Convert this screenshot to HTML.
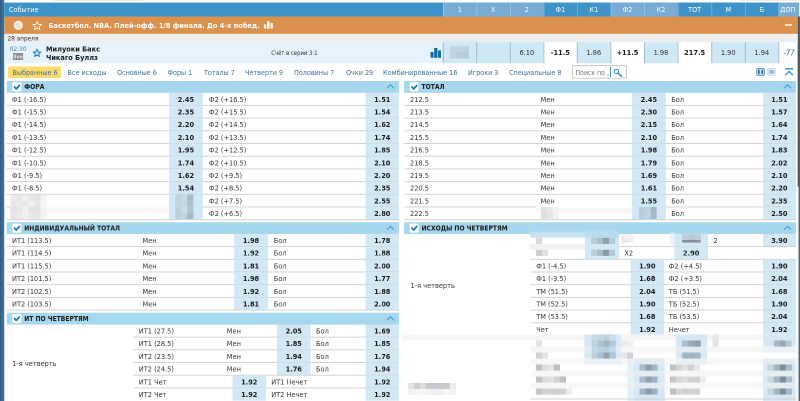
<!DOCTYPE html>
<html lang="ru"><head><meta charset="utf-8"><title>NBA</title>
<style>
html,body{margin:0;padding:0;background:#fff;overflow:hidden;}
body{width:800px;height:401px;overflow:hidden;position:relative;font-family:"DejaVu Sans Condensed","Liberation Sans",sans-serif;font-size:7.35px;color:#222;}
#z{position:absolute;left:0;top:0;width:800px;height:401px;zoom:2;transform:scale(.5);transform-origin:0 0;will-change:transform;}
#z>div,#z>svg{position:absolute;}
.t{white-space:nowrap;}
.w{color:#fff;}
.b{font-weight:bold;}
.tab{color:#3f6f9f;}
</style></head><body><div id="z">
<svg style="left:0;top:0" width="800" height="401" viewBox="0 0 800 401"><defs><filter id="b35" x="-60%" y="-60%" width="220%" height="220%"><feGaussianBlur stdDeviation="0.35"/></filter><filter id="b40" x="-60%" y="-60%" width="220%" height="220%"><feGaussianBlur stdDeviation="0.4"/></filter><filter id="b50" x="-60%" y="-60%" width="220%" height="220%"><feGaussianBlur stdDeviation="0.5"/></filter></defs>
<rect x="0.00" y="0.00" width="800.00" height="2.70" fill="#fff"/>
<rect x="54.00" y="0.00" width="89.00" height="0.70" fill="#e2e2e2"/>
<rect x="740.00" y="0.00" width="56.00" height="0.70" fill="#e2e2e2"/>
<rect x="0.00" y="0.00" width="4.20" height="401.00" fill="#2f70a6"/>
<rect x="0.00" y="0.00" width="1.20" height="401.00" fill="#3a5a78"/>
<rect x="797.70" y="16.50" width="1.30" height="385.00" fill="#d4d4d4"/>
<rect x="797.70" y="16.50" width="1.20" height="170.00" fill="#454545"/>
<rect x="798.80" y="16.50" width="1.20" height="385.00" fill="#3d6488"/>
<rect x="797.00" y="2.60" width="2.00" height="13.90" fill="#78acd4"/>
<rect x="799.00" y="2.60" width="1.00" height="13.90" fill="#e6eef5"/>
<rect x="4.20" y="2.60" width="792.80" height="13.90" fill="#3e94c8"/>
<rect x="443.00" y="2.60" width="33.50" height="13.90" fill="#78acd4"/>
<rect x="443.00" y="2.60" width="0.70" height="13.90" fill="rgba(255,255,255,.35)"/>
<rect x="476.50" y="2.60" width="33.50" height="13.90" fill="#78acd4"/>
<rect x="476.50" y="2.60" width="0.70" height="13.90" fill="rgba(255,255,255,.35)"/>
<rect x="510.00" y="2.60" width="33.70" height="13.90" fill="#78acd4"/>
<rect x="510.00" y="2.60" width="0.70" height="13.90" fill="rgba(255,255,255,.35)"/>
<rect x="543.70" y="2.60" width="33.30" height="13.90" fill="#3e94c8"/>
<rect x="543.70" y="2.60" width="0.70" height="13.90" fill="rgba(255,255,255,.35)"/>
<rect x="577.00" y="2.60" width="33.70" height="13.90" fill="#3e94c8"/>
<rect x="577.00" y="2.60" width="0.70" height="13.90" fill="rgba(255,255,255,.35)"/>
<rect x="610.70" y="2.60" width="33.50" height="13.90" fill="#78acd4"/>
<rect x="610.70" y="2.60" width="0.70" height="13.90" fill="rgba(255,255,255,.35)"/>
<rect x="644.20" y="2.60" width="33.60" height="13.90" fill="#78acd4"/>
<rect x="644.20" y="2.60" width="0.70" height="13.90" fill="rgba(255,255,255,.35)"/>
<rect x="677.80" y="2.60" width="33.70" height="13.90" fill="#3e94c8"/>
<rect x="677.80" y="2.60" width="0.70" height="13.90" fill="rgba(255,255,255,.35)"/>
<rect x="711.50" y="2.60" width="33.50" height="13.90" fill="#3e94c8"/>
<rect x="711.50" y="2.60" width="0.70" height="13.90" fill="rgba(255,255,255,.35)"/>
<rect x="745.00" y="2.60" width="33.60" height="13.90" fill="#3e94c8"/>
<rect x="745.00" y="2.60" width="0.70" height="13.90" fill="rgba(255,255,255,.35)"/>
<rect x="778.60" y="2.60" width="18.40" height="13.90" fill="#78acd4"/>
<rect x="778.60" y="2.60" width="0.70" height="13.90" fill="rgba(255,255,255,.35)"/>
<rect x="4.20" y="16.50" width="793.60" height="17.40" fill="#da914e"/>
<rect x="263.90" y="24.40" width="2.40" height="4.20" fill="#fdf3e8"/>
<rect x="267.10" y="21.20" width="2.60" height="7.40" fill="#fdf3e8"/>
<rect x="270.50" y="23.00" width="2.40" height="5.60" fill="#fdf3e8"/>
<rect x="784.90" y="24.00" width="7.20" height="2.00" fill="#f6dfc6"/>
<rect x="4.20" y="33.90" width="793.60" height="8.50" fill="#eeeeef"/>
<rect x="4.20" y="42.30" width="792.80" height="20.90" fill="#e6f3fc"/>
<rect x="430.60" y="52.00" width="2.90" height="5.80" fill="#0f69a6"/>
<rect x="434.20" y="48.00" width="3.20" height="9.80" fill="#0f69a6"/>
<rect x="438.10" y="50.40" width="2.90" height="7.40" fill="#0f69a6"/>
<rect x="13.00" y="53.00" width="10.10" height="7.00" fill="#8c8c8c"/>
<rect x="443.00" y="42.20" width="33.50" height="21.00" fill="#cfe8f6"/>
<rect x="442.80" y="42.20" width="0.90" height="21.00" fill="rgba(120,145,160,.6)"/>
<rect x="476.50" y="42.20" width="33.50" height="21.00" fill="#cfe8f6"/>
<rect x="476.30" y="42.20" width="0.90" height="21.00" fill="rgba(120,145,160,.6)"/>
<rect x="510.00" y="42.20" width="33.70" height="21.00" fill="#cfe8f6"/>
<rect x="509.80" y="42.20" width="0.90" height="21.00" fill="rgba(120,145,160,.6)"/>
<rect x="543.70" y="42.20" width="33.30" height="21.00" fill="#fff"/>
<rect x="543.50" y="42.20" width="0.90" height="21.00" fill="rgba(120,145,160,.6)"/>
<rect x="577.00" y="42.20" width="33.70" height="21.00" fill="#cfe8f6"/>
<rect x="576.80" y="42.20" width="0.90" height="21.00" fill="rgba(120,145,160,.6)"/>
<rect x="610.70" y="42.20" width="33.50" height="21.00" fill="#fff"/>
<rect x="610.50" y="42.20" width="0.90" height="21.00" fill="rgba(120,145,160,.6)"/>
<rect x="644.20" y="42.20" width="33.60" height="21.00" fill="#cfe8f6"/>
<rect x="644.00" y="42.20" width="0.90" height="21.00" fill="rgba(120,145,160,.6)"/>
<rect x="677.80" y="42.20" width="33.70" height="21.00" fill="#fff"/>
<rect x="677.60" y="42.20" width="0.90" height="21.00" fill="rgba(120,145,160,.6)"/>
<rect x="711.50" y="42.20" width="33.50" height="21.00" fill="#cfe8f6"/>
<rect x="711.30" y="42.20" width="0.90" height="21.00" fill="rgba(120,145,160,.6)"/>
<rect x="745.00" y="42.20" width="33.60" height="21.00" fill="#cfe8f6"/>
<rect x="744.80" y="42.20" width="0.90" height="21.00" fill="rgba(120,145,160,.6)"/>
<rect x="778.60" y="42.20" width="18.40" height="21.00" fill="#fdfeff"/>
<rect x="778.40" y="42.20" width="0.90" height="21.00" fill="rgba(120,145,160,.6)"/>
<rect x="442.70" y="40.40" width="33.60" height="2.00" fill="#dcebf3" filter="url(#b40)"/>
<rect x="450.00" y="46.20" width="6.40" height="6.20" fill="#c0d3e0" filter="url(#b35)"/>
<rect x="456.33" y="46.20" width="6.40" height="6.20" fill="#c2d5e1" filter="url(#b35)"/>
<rect x="462.66" y="46.20" width="6.40" height="6.20" fill="#bdd1de" filter="url(#b35)"/>
<rect x="450.00" y="52.30" width="6.40" height="6.20" fill="#bfd2df" filter="url(#b35)"/>
<rect x="456.33" y="52.30" width="6.40" height="6.20" fill="#b7ccda" filter="url(#b35)"/>
<rect x="462.66" y="52.30" width="6.40" height="6.20" fill="#b6cbd9" filter="url(#b35)"/>
<rect x="8.00" y="66.50" width="53.00" height="11.50" fill="#fcdc6c"/>
<rect x="572.40" y="65.70" width="54.00" height="12.40" fill="#fff" stroke="#bcbcbc" stroke-width="0.8" rx="1.5"/>
<rect x="610.00" y="67.00" width="0.90" height="10.00" fill="#2f8cc8"/>
<rect x="756.75" y="68.45" width="7.80" height="6.90" fill="#dbe8f3" stroke="#5a8fc0" stroke-width="0.9" rx="1.5"/>
<rect x="758.00" y="69.70" width="1.70" height="4.40" fill="#2f6ea8"/>
<rect x="761.40" y="69.70" width="1.70" height="4.40" fill="#2f6ea8"/>
<rect x="767.65" y="68.45" width="7.70" height="6.90" fill="#eef3f8" stroke="#c5d6e6" stroke-width="0.9" rx="1.5"/>
<rect x="769.10" y="69.90" width="5.00" height="4.00" fill="#a3bcd8"/>
<rect x="784.90" y="68.00" width="8.20" height="1.60" fill="#4a9bcf"/>
<rect x="6.80" y="81.00" width="392.10" height="11.80" fill="#a6d7ee"/>
<rect x="12.30" y="82.40" width="9.00" height="9.00" fill="#fff" rx="1.5"/>
<rect x="169.10" y="92.70" width="33.70" height="12.70" fill="#d3e8f5"/>
<rect x="365.60" y="92.70" width="33.30" height="12.70" fill="#d3e8f5"/>
<rect x="6.80" y="104.95" width="392.10" height="0.90" fill="#cfcfcf"/>
<rect x="169.10" y="105.40" width="33.70" height="12.70" fill="#d3e8f5"/>
<rect x="365.60" y="105.40" width="33.30" height="12.70" fill="#d3e8f5"/>
<rect x="6.80" y="117.65" width="392.10" height="0.90" fill="#cfcfcf"/>
<rect x="169.10" y="118.10" width="33.70" height="12.70" fill="#d3e8f5"/>
<rect x="365.60" y="118.10" width="33.30" height="12.70" fill="#d3e8f5"/>
<rect x="6.80" y="130.35" width="392.10" height="0.90" fill="#cfcfcf"/>
<rect x="169.10" y="130.80" width="33.70" height="12.70" fill="#d3e8f5"/>
<rect x="365.60" y="130.80" width="33.30" height="12.70" fill="#d3e8f5"/>
<rect x="6.80" y="143.05" width="392.10" height="0.90" fill="#cfcfcf"/>
<rect x="169.10" y="143.50" width="33.70" height="12.70" fill="#d3e8f5"/>
<rect x="365.60" y="143.50" width="33.30" height="12.70" fill="#d3e8f5"/>
<rect x="6.80" y="155.75" width="392.10" height="0.90" fill="#cfcfcf"/>
<rect x="169.10" y="156.20" width="33.70" height="12.70" fill="#d3e8f5"/>
<rect x="365.60" y="156.20" width="33.30" height="12.70" fill="#d3e8f5"/>
<rect x="6.80" y="168.45" width="392.10" height="0.90" fill="#cfcfcf"/>
<rect x="169.10" y="168.90" width="33.70" height="12.70" fill="#d3e8f5"/>
<rect x="365.60" y="168.90" width="33.30" height="12.70" fill="#d3e8f5"/>
<rect x="6.80" y="181.15" width="392.10" height="0.90" fill="#cfcfcf"/>
<rect x="169.10" y="181.60" width="33.70" height="12.70" fill="#d3e8f5"/>
<rect x="365.60" y="181.60" width="33.30" height="12.70" fill="#d3e8f5"/>
<rect x="6.80" y="193.85" width="392.10" height="0.90" fill="#cfcfcf"/>
<rect x="169.10" y="194.30" width="33.70" height="12.70" fill="#d3e8f5"/>
<rect x="365.60" y="194.30" width="33.30" height="12.70" fill="#d3e8f5"/>
<rect x="6.80" y="206.55" width="3.50" height="0.90" fill="#cfcfcf"/>
<rect x="202.80" y="206.55" width="196.10" height="0.90" fill="#cfcfcf"/>
<rect x="46.80" y="207.50" width="122.30" height="5.50" fill="#f5f5f5" filter="url(#b50)"/>
<rect x="169.10" y="207.00" width="33.70" height="12.70" fill="#d3e8f5"/>
<rect x="365.60" y="207.00" width="33.30" height="12.70" fill="#d3e8f5"/>
<rect x="6.80" y="219.25" width="392.10" height="0.90" fill="#cfcfcf"/>
<rect x="10.30" y="194.50" width="6.18" height="6.20" fill="#ededef" filter="url(#b35)"/>
<rect x="16.38" y="194.50" width="6.18" height="6.20" fill="#e6e6e8" filter="url(#b35)"/>
<rect x="22.46" y="194.50" width="6.18" height="6.20" fill="#f1f1f2" filter="url(#b35)"/>
<rect x="28.54" y="194.50" width="6.18" height="6.20" fill="#e9e8e8" filter="url(#b35)"/>
<rect x="34.62" y="194.50" width="6.18" height="6.20" fill="#e3e3e5" filter="url(#b35)"/>
<rect x="40.70" y="194.50" width="6.18" height="6.20" fill="#f4f4f5" filter="url(#b35)"/>
<rect x="10.30" y="200.60" width="6.18" height="6.20" fill="#e6e6e8" filter="url(#b35)"/>
<rect x="16.38" y="200.60" width="6.18" height="6.20" fill="#ededef" filter="url(#b35)"/>
<rect x="22.46" y="200.60" width="6.18" height="6.20" fill="#e9e8e8" filter="url(#b35)"/>
<rect x="28.54" y="200.60" width="6.18" height="6.20" fill="#f1f1f2" filter="url(#b35)"/>
<rect x="34.62" y="200.60" width="6.18" height="6.20" fill="#e6e6e8" filter="url(#b35)"/>
<rect x="40.70" y="200.60" width="6.18" height="6.20" fill="#f4f4f5" filter="url(#b35)"/>
<rect x="10.30" y="206.70" width="6.18" height="6.20" fill="#e3e3e5" filter="url(#b35)"/>
<rect x="16.38" y="206.70" width="6.18" height="6.20" fill="#e6e6e8" filter="url(#b35)"/>
<rect x="22.46" y="206.70" width="6.18" height="6.20" fill="#f1f1f2" filter="url(#b35)"/>
<rect x="28.54" y="206.70" width="6.18" height="6.20" fill="#e3e3e5" filter="url(#b35)"/>
<rect x="34.62" y="206.70" width="6.18" height="6.20" fill="#e3e3e5" filter="url(#b35)"/>
<rect x="40.70" y="206.70" width="6.18" height="6.20" fill="#f4f4f5" filter="url(#b35)"/>
<rect x="10.30" y="212.80" width="6.18" height="6.20" fill="#e6e6e8" filter="url(#b35)"/>
<rect x="16.38" y="212.80" width="6.18" height="6.20" fill="#ededef" filter="url(#b35)"/>
<rect x="22.46" y="212.80" width="6.18" height="6.20" fill="#f1f1f2" filter="url(#b35)"/>
<rect x="28.54" y="212.80" width="6.18" height="6.20" fill="#e9e8e8" filter="url(#b35)"/>
<rect x="34.62" y="212.80" width="6.18" height="6.20" fill="#e6e6e8" filter="url(#b35)"/>
<rect x="40.70" y="212.80" width="6.18" height="6.20" fill="#f4f4f5" filter="url(#b35)"/>
<rect x="175.20" y="194.50" width="6.15" height="6.20" fill="#bfd4e0" filter="url(#b35)"/>
<rect x="181.25" y="194.50" width="6.15" height="6.20" fill="#c5dce6" filter="url(#b35)"/>
<rect x="187.30" y="194.50" width="6.15" height="6.20" fill="#a9bccb" filter="url(#b35)"/>
<rect x="175.20" y="200.60" width="6.15" height="6.20" fill="#bdd3df" filter="url(#b35)"/>
<rect x="181.25" y="200.60" width="6.15" height="6.20" fill="#c0d6e2" filter="url(#b35)"/>
<rect x="187.30" y="200.60" width="6.15" height="6.20" fill="#adc2d0" filter="url(#b35)"/>
<rect x="175.20" y="206.70" width="6.15" height="6.20" fill="#bdd2de" filter="url(#b35)"/>
<rect x="181.25" y="206.70" width="6.15" height="6.20" fill="#c8dfe9" filter="url(#b35)"/>
<rect x="187.30" y="206.70" width="6.15" height="6.20" fill="#b0c4d2" filter="url(#b35)"/>
<rect x="175.20" y="212.80" width="6.15" height="6.20" fill="#b9cfdb" filter="url(#b35)"/>
<rect x="181.25" y="212.80" width="6.15" height="6.20" fill="#bfd5e1" filter="url(#b35)"/>
<rect x="187.30" y="212.80" width="6.15" height="6.20" fill="#a5b9c8" filter="url(#b35)"/>
<rect x="404.10" y="81.00" width="391.80" height="11.80" fill="#a6d7ee"/>
<rect x="409.60" y="82.40" width="9.00" height="9.00" fill="#fff" rx="1.5"/>
<rect x="632.00" y="92.70" width="33.90" height="12.70" fill="#d3e8f5"/>
<rect x="762.80" y="92.70" width="33.10" height="12.70" fill="#d3e8f5"/>
<rect x="404.10" y="104.95" width="391.80" height="0.90" fill="#cfcfcf"/>
<rect x="632.00" y="105.40" width="33.90" height="12.70" fill="#d3e8f5"/>
<rect x="762.80" y="105.40" width="33.10" height="12.70" fill="#d3e8f5"/>
<rect x="404.10" y="117.65" width="391.80" height="0.90" fill="#cfcfcf"/>
<rect x="632.00" y="118.10" width="33.90" height="12.70" fill="#d3e8f5"/>
<rect x="762.80" y="118.10" width="33.10" height="12.70" fill="#d3e8f5"/>
<rect x="404.10" y="130.35" width="391.80" height="0.90" fill="#cfcfcf"/>
<rect x="632.00" y="130.80" width="33.90" height="12.70" fill="#d3e8f5"/>
<rect x="762.80" y="130.80" width="33.10" height="12.70" fill="#d3e8f5"/>
<rect x="404.10" y="143.05" width="391.80" height="0.90" fill="#cfcfcf"/>
<rect x="632.00" y="143.50" width="33.90" height="12.70" fill="#d3e8f5"/>
<rect x="762.80" y="143.50" width="33.10" height="12.70" fill="#d3e8f5"/>
<rect x="404.10" y="155.75" width="391.80" height="0.90" fill="#cfcfcf"/>
<rect x="632.00" y="156.20" width="33.90" height="12.70" fill="#d3e8f5"/>
<rect x="762.80" y="156.20" width="33.10" height="12.70" fill="#d3e8f5"/>
<rect x="404.10" y="168.45" width="391.80" height="0.90" fill="#cfcfcf"/>
<rect x="632.00" y="168.90" width="33.90" height="12.70" fill="#d3e8f5"/>
<rect x="762.80" y="168.90" width="33.10" height="12.70" fill="#d3e8f5"/>
<rect x="404.10" y="181.15" width="391.80" height="0.90" fill="#cfcfcf"/>
<rect x="632.00" y="181.60" width="33.90" height="12.70" fill="#d3e8f5"/>
<rect x="762.80" y="181.60" width="33.10" height="12.70" fill="#d3e8f5"/>
<rect x="404.10" y="193.85" width="391.80" height="0.90" fill="#cfcfcf"/>
<rect x="632.00" y="194.30" width="33.90" height="12.70" fill="#d3e8f5"/>
<rect x="762.80" y="194.30" width="33.10" height="12.70" fill="#d3e8f5"/>
<rect x="404.10" y="206.55" width="131.90" height="0.90" fill="#cfcfcf"/>
<rect x="665.90" y="206.55" width="130.00" height="0.90" fill="#cfcfcf"/>
<rect x="536.00" y="207.60" width="96.00" height="5.50" fill="#f6f6f6" filter="url(#b50)"/>
<rect x="632.00" y="207.00" width="33.90" height="12.70" fill="#d3e8f5"/>
<rect x="762.80" y="207.00" width="33.10" height="12.70" fill="#d3e8f5"/>
<rect x="404.10" y="219.25" width="391.80" height="0.90" fill="#cfcfcf"/>
<rect x="540.90" y="207.00" width="6.10" height="6.00" fill="#e2e2e6" filter="url(#b35)"/>
<rect x="546.90" y="207.00" width="6.10" height="6.00" fill="#e9e7e9" filter="url(#b35)"/>
<rect x="552.90" y="207.00" width="6.10" height="6.00" fill="#f2f2f3" filter="url(#b35)"/>
<rect x="540.90" y="212.90" width="6.10" height="6.00" fill="#dedee2" filter="url(#b35)"/>
<rect x="546.90" y="212.90" width="6.10" height="6.00" fill="#e4e4e8" filter="url(#b35)"/>
<rect x="552.90" y="212.90" width="6.10" height="6.00" fill="#f3f3f4" filter="url(#b35)"/>
<rect x="638.80" y="207.00" width="6.05" height="6.00" fill="#b8cedb" filter="url(#b35)"/>
<rect x="644.75" y="207.00" width="6.05" height="6.00" fill="#bdd4e0" filter="url(#b35)"/>
<rect x="650.70" y="207.00" width="6.05" height="6.00" fill="#a3b7c6" filter="url(#b35)"/>
<rect x="638.80" y="212.90" width="6.05" height="6.00" fill="#b6ccd9" filter="url(#b35)"/>
<rect x="644.75" y="212.90" width="6.05" height="6.00" fill="#bfd6e2" filter="url(#b35)"/>
<rect x="650.70" y="212.90" width="6.05" height="6.00" fill="#a6bac9" filter="url(#b35)"/>
<rect x="6.80" y="222.25" width="392.10" height="11.80" fill="#a6d7ee"/>
<rect x="12.30" y="223.65" width="9.00" height="9.00" fill="#fff" rx="1.5"/>
<rect x="234.10" y="233.90" width="33.80" height="12.70" fill="#d3e8f5"/>
<rect x="365.60" y="233.90" width="33.30" height="12.70" fill="#d3e8f5"/>
<rect x="6.80" y="246.15" width="392.10" height="0.90" fill="#cfcfcf"/>
<rect x="234.10" y="246.60" width="33.80" height="12.70" fill="#d3e8f5"/>
<rect x="365.60" y="246.60" width="33.30" height="12.70" fill="#d3e8f5"/>
<rect x="6.80" y="258.85" width="392.10" height="0.90" fill="#cfcfcf"/>
<rect x="234.10" y="259.30" width="33.80" height="12.70" fill="#d3e8f5"/>
<rect x="365.60" y="259.30" width="33.30" height="12.70" fill="#d3e8f5"/>
<rect x="6.80" y="271.55" width="392.10" height="0.90" fill="#cfcfcf"/>
<rect x="234.10" y="272.00" width="33.80" height="12.70" fill="#d3e8f5"/>
<rect x="365.60" y="272.00" width="33.30" height="12.70" fill="#d3e8f5"/>
<rect x="6.80" y="284.25" width="392.10" height="0.90" fill="#cfcfcf"/>
<rect x="234.10" y="284.70" width="33.80" height="12.70" fill="#d3e8f5"/>
<rect x="365.60" y="284.70" width="33.30" height="12.70" fill="#d3e8f5"/>
<rect x="6.80" y="296.95" width="392.10" height="0.90" fill="#cfcfcf"/>
<rect x="234.10" y="297.40" width="33.80" height="12.70" fill="#d3e8f5"/>
<rect x="365.60" y="297.40" width="33.30" height="12.70" fill="#d3e8f5"/>
<rect x="6.80" y="309.65" width="392.10" height="0.90" fill="#cfcfcf"/>
<rect x="6.80" y="312.75" width="392.10" height="11.80" fill="#a6d7ee"/>
<rect x="12.30" y="314.15" width="9.00" height="9.00" fill="#fff" rx="1.5"/>
<rect x="276.90" y="324.45" width="33.70" height="12.70" fill="#d3e8f5"/>
<rect x="365.60" y="324.45" width="33.30" height="12.70" fill="#d3e8f5"/>
<rect x="133.00" y="336.70" width="265.90" height="0.90" fill="#cfcfcf"/>
<rect x="276.90" y="337.15" width="33.70" height="12.70" fill="#d3e8f5"/>
<rect x="365.60" y="337.15" width="33.30" height="12.70" fill="#d3e8f5"/>
<rect x="133.00" y="349.40" width="265.90" height="0.90" fill="#cfcfcf"/>
<rect x="276.90" y="349.85" width="33.70" height="12.70" fill="#d3e8f5"/>
<rect x="365.60" y="349.85" width="33.30" height="12.70" fill="#d3e8f5"/>
<rect x="133.00" y="362.10" width="265.90" height="0.90" fill="#cfcfcf"/>
<rect x="276.90" y="362.55" width="33.70" height="12.70" fill="#d3e8f5"/>
<rect x="365.60" y="362.55" width="33.30" height="12.70" fill="#d3e8f5"/>
<rect x="133.00" y="374.80" width="265.90" height="0.90" fill="#cfcfcf"/>
<rect x="232.50" y="375.25" width="33.50" height="12.70" fill="#d3e8f5"/>
<rect x="365.60" y="375.25" width="33.30" height="12.70" fill="#d3e8f5"/>
<rect x="133.50" y="387.50" width="265.40" height="0.90" fill="#cfcfcf"/>
<rect x="232.50" y="387.95" width="33.50" height="12.70" fill="#d3e8f5"/>
<rect x="365.60" y="387.95" width="33.30" height="12.70" fill="#d3e8f5"/>
<rect x="404.10" y="222.25" width="391.80" height="11.80" fill="#a6d7ee"/>
<rect x="409.60" y="223.65" width="9.00" height="9.00" fill="#fff" rx="1.5"/>
<rect x="585.00" y="233.90" width="34.00" height="12.70" fill="#d3e8f5"/>
<rect x="674.40" y="233.90" width="33.60" height="12.70" fill="#d3e8f5"/>
<rect x="762.80" y="233.90" width="33.10" height="12.70" fill="#d3e8f5"/>
<rect x="619.00" y="246.15" width="176.90" height="0.90" fill="#cfcfcf"/>
<rect x="585.00" y="246.60" width="34.00" height="12.70" fill="#d3e8f5"/>
<rect x="674.40" y="246.60" width="33.60" height="12.70" fill="#d3e8f5"/>
<rect x="530.60" y="258.85" width="265.30" height="0.90" fill="#cfcfcf"/>
<rect x="530.00" y="231.80" width="89.00" height="5.90" fill="#c6e2f1" filter="url(#b40)"/>
<rect x="585.00" y="231.80" width="34.00" height="5.90" fill="#bcdcee" filter="url(#b40)"/>
<rect x="670.00" y="233.00" width="4.60" height="12.00" fill="#e8f1f7" filter="url(#b40)"/>
<rect x="530.00" y="243.80" width="55.00" height="5.90" fill="#f2f2f2" filter="url(#b50)"/>
<rect x="536.00" y="237.80" width="6.10" height="6.10" fill="#dcd8dc" filter="url(#b35)"/>
<rect x="536.00" y="249.80" width="6.10" height="6.10" fill="#cfc8cc" filter="url(#b35)"/>
<rect x="542.00" y="249.80" width="6.10" height="6.10" fill="#dde0e4" filter="url(#b35)"/>
<rect x="591.00" y="237.80" width="6.10" height="6.10" fill="#bccbd6" filter="url(#b35)"/>
<rect x="597.00" y="237.80" width="6.10" height="6.10" fill="#aabccd" filter="url(#b35)"/>
<rect x="603.00" y="237.80" width="6.10" height="6.10" fill="#8f9ea6" filter="url(#b35)"/>
<rect x="609.00" y="237.80" width="6.10" height="6.10" fill="#b5c9d8" filter="url(#b35)"/>
<rect x="591.00" y="249.80" width="6.10" height="6.10" fill="#bfccd5" filter="url(#b35)"/>
<rect x="597.00" y="249.80" width="6.10" height="6.10" fill="#a9bbcc" filter="url(#b35)"/>
<rect x="603.00" y="249.80" width="6.10" height="6.10" fill="#8e9da5" filter="url(#b35)"/>
<rect x="609.00" y="249.80" width="6.10" height="6.10" fill="#b3c7d6" filter="url(#b35)"/>
<rect x="621.30" y="234.30" width="6.10" height="4.30" fill="#f5f1f1" filter="url(#b35)"/>
<rect x="627.30" y="234.30" width="6.10" height="4.30" fill="#f6f2f2" filter="url(#b35)"/>
<rect x="621.30" y="238.50" width="6.10" height="4.10" fill="#f2e6e3" filter="url(#b35)"/>
<rect x="627.30" y="238.50" width="6.10" height="4.10" fill="#f4edeb" filter="url(#b35)"/>
<rect x="682.00" y="234.30" width="6.35" height="5.90" fill="#c0cfda" filter="url(#b35)"/>
<rect x="688.25" y="234.30" width="6.35" height="5.90" fill="#b7c7d3" filter="url(#b35)"/>
<rect x="694.50" y="234.30" width="6.35" height="5.90" fill="#bccbd6" filter="url(#b35)"/>
<rect x="682.00" y="240.00" width="18.75" height="2.60" fill="#8a9299" filter="url(#b35)"/>
<rect x="630.60" y="259.30" width="33.40" height="12.70" fill="#d3e8f5"/>
<rect x="762.80" y="259.30" width="33.10" height="12.70" fill="#d3e8f5"/>
<rect x="530.60" y="271.55" width="265.30" height="0.90" fill="#cfcfcf"/>
<rect x="630.60" y="272.00" width="33.40" height="12.70" fill="#d3e8f5"/>
<rect x="762.80" y="272.00" width="33.10" height="12.70" fill="#d3e8f5"/>
<rect x="530.60" y="284.25" width="265.30" height="0.90" fill="#cfcfcf"/>
<rect x="630.60" y="284.70" width="33.40" height="12.70" fill="#d3e8f5"/>
<rect x="762.80" y="284.70" width="33.10" height="12.70" fill="#d3e8f5"/>
<rect x="530.60" y="296.95" width="265.30" height="0.90" fill="#cfcfcf"/>
<rect x="630.60" y="297.40" width="33.40" height="12.70" fill="#d3e8f5"/>
<rect x="762.80" y="297.40" width="33.10" height="12.70" fill="#d3e8f5"/>
<rect x="530.60" y="309.65" width="265.30" height="0.90" fill="#cfcfcf"/>
<rect x="630.60" y="310.10" width="33.40" height="12.70" fill="#d3e8f5"/>
<rect x="762.80" y="310.10" width="33.10" height="12.70" fill="#d3e8f5"/>
<rect x="530.60" y="322.35" width="265.30" height="0.90" fill="#cfcfcf"/>
<rect x="630.60" y="322.80" width="33.40" height="12.70" fill="#d3e8f5"/>
<rect x="762.80" y="322.80" width="33.10" height="12.70" fill="#d3e8f5"/>
<rect x="401.80" y="334.50" width="394.10" height="6.00" fill="#f6f6f6" filter="url(#b50)"/>
<rect x="584.50" y="334.50" width="36.40" height="24.00" fill="#d5e8f3" filter="url(#b40)"/>
<rect x="584.50" y="358.50" width="36.40" height="6.00" fill="#e3f0f7" filter="url(#b40)"/>
<rect x="676.00" y="334.50" width="31.00" height="24.00" fill="#d5e8f3" filter="url(#b40)"/>
<rect x="676.00" y="358.50" width="31.00" height="6.00" fill="#e3f0f7" filter="url(#b40)"/>
<rect x="763.00" y="334.50" width="32.90" height="12.00" fill="#d5e8f3" filter="url(#b40)"/>
<rect x="763.00" y="346.50" width="32.90" height="6.00" fill="#eaf3f8" filter="url(#b40)"/>
<rect x="627.40" y="358.50" width="6.00" height="43.00" fill="#e3f0f7" filter="url(#b40)"/>
<rect x="633.40" y="358.50" width="31.50" height="43.00" fill="#d5e8f3" filter="url(#b40)"/>
<rect x="763.00" y="358.50" width="32.90" height="43.00" fill="#d5e8f3" filter="url(#b40)"/>
<rect x="530.60" y="346.50" width="265.30" height="6.00" fill="rgba(240,240,240,.55)" filter="url(#b50)"/>
<rect x="530.60" y="358.50" width="265.30" height="6.00" fill="rgba(240,240,240,.55)" filter="url(#b50)"/>
<rect x="530.60" y="370.50" width="265.30" height="6.00" fill="rgba(240,240,240,.55)" filter="url(#b50)"/>
<rect x="530.60" y="382.50" width="265.30" height="6.00" fill="rgba(240,240,240,.55)" filter="url(#b50)"/>
<rect x="591.60" y="334.50" width="6.10" height="6.10" fill="#c5dbe6" filter="url(#b35)"/>
<rect x="597.60" y="334.50" width="6.10" height="6.10" fill="#c2d6e2" filter="url(#b35)"/>
<rect x="603.60" y="334.50" width="6.10" height="6.10" fill="#bccfdb" filter="url(#b35)"/>
<rect x="609.60" y="334.50" width="6.10" height="6.10" fill="#c9dfec" filter="url(#b35)"/>
<rect x="535.90" y="340.50" width="6.10" height="6.10" fill="#e4e1e6" filter="url(#b35)"/>
<rect x="591.60" y="340.50" width="6.10" height="6.10" fill="#bed5e1" filter="url(#b35)"/>
<rect x="597.60" y="340.50" width="6.10" height="6.10" fill="#a9c3d5" filter="url(#b35)"/>
<rect x="603.60" y="340.50" width="6.10" height="6.10" fill="#9fb5c0" filter="url(#b35)"/>
<rect x="609.60" y="340.50" width="6.10" height="6.10" fill="#b3cadd" filter="url(#b35)"/>
<rect x="621.00" y="340.50" width="6.10" height="6.10" fill="#eeeae8" filter="url(#b35)"/>
<rect x="627.00" y="340.50" width="6.10" height="6.10" fill="#f0f0f4" filter="url(#b35)"/>
<rect x="682.20" y="340.50" width="6.23" height="6.10" fill="#aabdcb" filter="url(#b35)"/>
<rect x="688.33" y="340.50" width="6.23" height="6.10" fill="#98a9b5" filter="url(#b35)"/>
<rect x="694.46" y="340.50" width="6.23" height="6.10" fill="#8f9fab" filter="url(#b35)"/>
<rect x="712.50" y="334.50" width="6.10" height="6.10" fill="#e6e6e6" filter="url(#b35)"/>
<rect x="712.50" y="340.50" width="6.10" height="6.10" fill="#e2e2e2" filter="url(#b35)"/>
<rect x="773.80" y="340.50" width="5.95" height="6.10" fill="#a9b7c2" filter="url(#b35)"/>
<rect x="779.65" y="340.50" width="5.95" height="6.10" fill="#95a5b0" filter="url(#b35)"/>
<rect x="785.50" y="340.50" width="5.95" height="6.10" fill="#b5c6d3" filter="url(#b35)"/>
<rect x="591.60" y="346.50" width="6.10" height="6.10" fill="#c0d9e8" filter="url(#b35)"/>
<rect x="597.60" y="346.50" width="6.10" height="6.10" fill="#b9d3e4" filter="url(#b35)"/>
<rect x="603.60" y="346.50" width="6.10" height="6.10" fill="#b4cfe0" filter="url(#b35)"/>
<rect x="609.60" y="346.50" width="6.10" height="6.10" fill="#c3dcec" filter="url(#b35)"/>
<rect x="535.90" y="352.50" width="6.10" height="6.10" fill="#d6cfd2" filter="url(#b35)"/>
<rect x="541.90" y="352.50" width="6.10" height="6.10" fill="#dfe3e8" filter="url(#b35)"/>
<rect x="591.60" y="352.50" width="6.10" height="6.10" fill="#bfd0d8" filter="url(#b35)"/>
<rect x="597.60" y="352.50" width="6.10" height="6.10" fill="#a6c0d3" filter="url(#b35)"/>
<rect x="603.60" y="352.50" width="6.10" height="6.10" fill="#93a4a8" filter="url(#b35)"/>
<rect x="609.60" y="352.50" width="6.10" height="6.10" fill="#aac6dc" filter="url(#b35)"/>
<rect x="621.00" y="352.50" width="6.10" height="6.10" fill="#ece6e4" filter="url(#b35)"/>
<rect x="627.00" y="352.50" width="6.10" height="6.10" fill="#d0d0d8" filter="url(#b35)"/>
<rect x="682.20" y="352.50" width="6.23" height="6.10" fill="#a3b8c6" filter="url(#b35)"/>
<rect x="688.33" y="352.50" width="6.23" height="6.10" fill="#a0b4c2" filter="url(#b35)"/>
<rect x="694.46" y="352.50" width="6.23" height="6.10" fill="#a2b6c4" filter="url(#b35)"/>
<rect x="535.90" y="364.50" width="6.10" height="6.10" fill="#c0bfc3" filter="url(#b35)"/>
<rect x="541.90" y="364.50" width="6.10" height="6.10" fill="#e0dde0" filter="url(#b35)"/>
<rect x="547.90" y="364.50" width="6.10" height="6.10" fill="#e6e4e2" filter="url(#b35)"/>
<rect x="553.90" y="364.50" width="6.10" height="6.10" fill="#bdbcc6" filter="url(#b35)"/>
<rect x="670.00" y="364.50" width="6.10" height="6.10" fill="#c0c0bc" filter="url(#b35)"/>
<rect x="676.00" y="364.50" width="6.10" height="6.10" fill="#d4d4d4" filter="url(#b35)"/>
<rect x="682.00" y="364.50" width="6.10" height="6.10" fill="#dedede" filter="url(#b35)"/>
<rect x="688.00" y="364.50" width="6.10" height="6.10" fill="#d3d1d3" filter="url(#b35)"/>
<rect x="694.00" y="364.50" width="6.10" height="6.10" fill="#e8e8ec" filter="url(#b35)"/>
<rect x="639.50" y="364.50" width="6.10" height="6.10" fill="#a8bccb" filter="url(#b35)"/>
<rect x="645.50" y="364.50" width="6.10" height="6.10" fill="#8d9ca0" filter="url(#b35)"/>
<rect x="651.50" y="364.50" width="6.10" height="6.10" fill="#a0b6c8" filter="url(#b35)"/>
<rect x="767.60" y="364.50" width="6.20" height="6.10" fill="#c5d6d8" filter="url(#b35)"/>
<rect x="773.70" y="364.50" width="6.20" height="6.10" fill="#a3b5c1" filter="url(#b35)"/>
<rect x="779.80" y="364.50" width="6.20" height="6.10" fill="#7e8f9b" filter="url(#b35)"/>
<rect x="785.90" y="364.50" width="6.20" height="6.10" fill="#a9bccb" filter="url(#b35)"/>
<rect x="535.90" y="376.50" width="6.10" height="6.10" fill="#c3c2c6" filter="url(#b35)"/>
<rect x="541.90" y="376.50" width="6.10" height="6.10" fill="#dddbe0" filter="url(#b35)"/>
<rect x="547.90" y="376.50" width="6.10" height="6.10" fill="#e2e0e0" filter="url(#b35)"/>
<rect x="553.90" y="376.50" width="6.10" height="6.10" fill="#d0cfd2" filter="url(#b35)"/>
<rect x="559.90" y="376.50" width="6.10" height="6.10" fill="#bfbfc3" filter="url(#b35)"/>
<rect x="670.00" y="376.50" width="6.10" height="6.10" fill="#c3c3c0" filter="url(#b35)"/>
<rect x="676.00" y="376.50" width="6.10" height="6.10" fill="#d5d5d5" filter="url(#b35)"/>
<rect x="682.00" y="376.50" width="6.10" height="6.10" fill="#d9dcd9" filter="url(#b35)"/>
<rect x="688.00" y="376.50" width="6.10" height="6.10" fill="#d2d2d2" filter="url(#b35)"/>
<rect x="694.00" y="376.50" width="6.10" height="6.10" fill="#d0d0d2" filter="url(#b35)"/>
<rect x="700.00" y="376.50" width="6.10" height="6.10" fill="#ececf0" filter="url(#b35)"/>
<rect x="639.50" y="376.50" width="6.10" height="6.10" fill="#a9bdcc" filter="url(#b35)"/>
<rect x="645.50" y="376.50" width="6.10" height="6.10" fill="#94a4a6" filter="url(#b35)"/>
<rect x="651.50" y="376.50" width="6.10" height="6.10" fill="#9fb4c7" filter="url(#b35)"/>
<rect x="767.60" y="376.50" width="6.20" height="6.10" fill="#c5d6d8" filter="url(#b35)"/>
<rect x="773.70" y="376.50" width="6.20" height="6.10" fill="#a3b5c1" filter="url(#b35)"/>
<rect x="779.80" y="376.50" width="6.20" height="6.10" fill="#7e8f9b" filter="url(#b35)"/>
<rect x="785.90" y="376.50" width="6.20" height="6.10" fill="#a9bccb" filter="url(#b35)"/>
<rect x="535.90" y="388.50" width="6.10" height="6.10" fill="#c8c3c8" filter="url(#b35)"/>
<rect x="541.90" y="388.50" width="6.10" height="6.10" fill="#cfd3d8" filter="url(#b35)"/>
<rect x="547.90" y="388.50" width="6.10" height="6.10" fill="#d4d0cc" filter="url(#b35)"/>
<rect x="553.90" y="388.50" width="6.10" height="6.10" fill="#cfcfd3" filter="url(#b35)"/>
<rect x="559.90" y="388.50" width="6.10" height="6.10" fill="#d0d0d4" filter="url(#b35)"/>
<rect x="565.90" y="388.50" width="6.10" height="6.10" fill="#ececf0" filter="url(#b35)"/>
<rect x="670.00" y="388.50" width="6.10" height="6.10" fill="#bfc0b8" filter="url(#b35)"/>
<rect x="676.00" y="388.50" width="6.10" height="6.10" fill="#d6d6d8" filter="url(#b35)"/>
<rect x="682.00" y="388.50" width="6.10" height="6.10" fill="#cfcfcf" filter="url(#b35)"/>
<rect x="688.00" y="388.50" width="6.10" height="6.10" fill="#d4d2d4" filter="url(#b35)"/>
<rect x="694.00" y="388.50" width="6.10" height="6.10" fill="#c9d3d6" filter="url(#b35)"/>
<rect x="639.50" y="388.50" width="6.10" height="6.10" fill="#a4b8c8" filter="url(#b35)"/>
<rect x="645.50" y="388.50" width="6.10" height="6.10" fill="#8c9ca6" filter="url(#b35)"/>
<rect x="651.50" y="388.50" width="6.10" height="6.10" fill="#9db2c5" filter="url(#b35)"/>
<rect x="767.60" y="388.50" width="6.20" height="6.10" fill="#c5d6d8" filter="url(#b35)"/>
<rect x="773.70" y="388.50" width="6.20" height="6.10" fill="#a3b5c1" filter="url(#b35)"/>
<rect x="779.80" y="388.50" width="6.20" height="6.10" fill="#7e8f9b" filter="url(#b35)"/>
<rect x="785.90" y="388.50" width="6.20" height="6.10" fill="#a9bccb" filter="url(#b35)"/>
<rect x="530.60" y="398.55" width="265.30" height="0.90" fill="#cfcfcf"/>
<rect x="407.90" y="383.00" width="6.10" height="6.10" fill="#e4e4e6" filter="url(#b35)"/>
<rect x="413.90" y="383.00" width="6.10" height="6.10" fill="#cfcfd1" filter="url(#b35)"/>
<rect x="419.90" y="383.00" width="6.10" height="6.10" fill="#e0dcde" filter="url(#b35)"/>
<rect x="425.90" y="383.00" width="6.10" height="6.10" fill="#c8c8ca" filter="url(#b35)"/>
<rect x="431.90" y="383.00" width="6.10" height="6.10" fill="#c3c9cf" filter="url(#b35)"/>
<rect x="437.90" y="383.00" width="6.10" height="6.10" fill="#c8c8ca" filter="url(#b35)"/>
<rect x="443.90" y="383.00" width="6.10" height="6.10" fill="#cacaca" filter="url(#b35)"/>
<rect x="449.90" y="383.00" width="6.10" height="6.10" fill="#eeeef2" filter="url(#b35)"/>
<rect x="407.90" y="389.00" width="6.10" height="6.10" fill="#f3f3f5" filter="url(#b35)"/>
<rect x="413.90" y="389.00" width="6.10" height="6.10" fill="#f6f6f6" filter="url(#b35)"/>
<rect x="419.90" y="389.00" width="6.10" height="6.10" fill="#f6f6f7" filter="url(#b35)"/>
<rect x="425.90" y="389.00" width="6.10" height="6.10" fill="#f2f2f2" filter="url(#b35)"/>
<rect x="431.90" y="389.00" width="6.10" height="6.10" fill="#f0f0f4" filter="url(#b35)"/>
<rect x="437.90" y="389.00" width="6.10" height="6.10" fill="#efeff0" filter="url(#b35)"/>
<rect x="443.90" y="389.00" width="6.10" height="6.10" fill="#f6f6f6" filter="url(#b35)"/>
<rect x="449.90" y="389.00" width="6.10" height="6.10" fill="#f4f4f8" filter="url(#b35)"/>
</svg>
<div class="t w" style="left:9.00px;top:3.50px;height:12px;line-height:12px;font-size:7.2px">Событие</div>
<div class="t w" style="left:443.00px;top:3.50px;height:12px;line-height:12px;width:33.50px;text-align:center;font-size:7.2px">1</div>
<div class="t w" style="left:476.50px;top:3.50px;height:12px;line-height:12px;width:33.50px;text-align:center;font-size:7.2px">X</div>
<div class="t w" style="left:510.00px;top:3.50px;height:12px;line-height:12px;width:33.70px;text-align:center;font-size:7.2px">2</div>
<div class="t w" style="left:543.70px;top:3.50px;height:12px;line-height:12px;width:33.30px;text-align:center;font-size:7.2px">Ф1</div>
<div class="t w" style="left:577.00px;top:3.50px;height:12px;line-height:12px;width:33.70px;text-align:center;font-size:7.2px">К1</div>
<div class="t w" style="left:610.70px;top:3.50px;height:12px;line-height:12px;width:33.50px;text-align:center;font-size:7.2px">Ф2</div>
<div class="t w" style="left:644.20px;top:3.50px;height:12px;line-height:12px;width:33.60px;text-align:center;font-size:7.2px">К2</div>
<div class="t w" style="left:677.80px;top:3.50px;height:12px;line-height:12px;width:33.70px;text-align:center;font-size:7.2px">ТОТ</div>
<div class="t w" style="left:711.50px;top:3.50px;height:12px;line-height:12px;width:33.50px;text-align:center;font-size:7.2px">М</div>
<div class="t w" style="left:745.00px;top:3.50px;height:12px;line-height:12px;width:33.60px;text-align:center;font-size:7.2px">Б</div>
<div class="t w" style="left:778.60px;top:3.50px;height:12px;line-height:12px;width:18.40px;text-align:center;font-size:7.2px">ДОП</div>
<svg style="left:13.7px;top:20.5px" width="9.6" height="9.6" viewBox="0 0 96 96"><circle cx="48" cy="48" r="47" fill="#fcf1e6"/><g stroke="#da914e" stroke-width="3" fill="none" opacity=".85"><path transform="rotate(45 48 48)" d="M48 0V96M0 48H96M14 17Q46 48 14 79M82 17Q50 48 82 79"/></g></svg>
<svg style="left:32px;top:20.6px" width="10.4" height="10.4" viewBox="0 0 24 24"><path d="M12 2.6l2.8 6.3 6.8.7-5.1 4.6 1.5 6.7L12 17.4l-6 3.5 1.5-6.7-5.1-4.6 6.8-.7z" fill="none" stroke="#fdf3e8" stroke-width="2.1" stroke-linejoin="miter"/></svg>
<div class="t w b" style="left:48.50px;top:19.30px;height:12px;line-height:12px;font-size:7.35px">Баскетбол. NBA. Плей-офф. 1/8 финала. До 4-х побед.</div>
<div class="t " style="left:7.50px;top:32.70px;height:12px;line-height:12px;font-size:6.4px;color:#333">28 апреля</div>
<svg style="left:32.6px;top:48.4px" width="9" height="9" viewBox="0 0 24 24"><path d="M12 2.6l2.8 6.3 6.8.7-5.1 4.6 1.5 6.7L12 17.4l-6 3.5 1.5-6.7-5.1-4.6 6.8-.7z" fill="none" stroke="#1f7fb8" stroke-width="2.8" stroke-linejoin="miter"/></svg>
<div class="t " style="left:9.80px;top:42.90px;height:12px;line-height:12px;font-size:6.45px;color:#3b7fb5">02:30</div>
<div class="t w b" style="left:13.00px;top:50.30px;height:12px;line-height:12px;width:10.10px;text-align:center;font-size:5.2px;color:#e4e4e4">live</div>
<div class="t b" style="left:46.00px;top:42.90px;height:12px;line-height:12px;font-size:7.32px;color:#1c1c1c">Милуоки Бакс</div>
<div class="t b" style="left:46.00px;top:51.50px;height:12px;line-height:12px;font-size:7.32px;color:#1c1c1c">Чикаго Буллз</div>
<div class="t " style="left:271.20px;top:46.80px;height:12px;line-height:12px;font-size:5.9px;color:#333">Счёт в серии 3:1</div>
<div class="t " style="left:510.00px;top:46.70px;height:12px;line-height:12px;width:33.70px;text-align:center;font-size:7.38px;color:#333">6.10</div>
<div class="t b" style="left:543.70px;top:46.70px;height:12px;line-height:12px;width:33.30px;text-align:center;font-size:7.4px;color:#1c1c1c">-11.5</div>
<div class="t " style="left:577.00px;top:46.70px;height:12px;line-height:12px;width:33.70px;text-align:center;font-size:7.38px;color:#333">1.86</div>
<div class="t b" style="left:610.70px;top:46.70px;height:12px;line-height:12px;width:33.50px;text-align:center;font-size:7.4px;color:#1c1c1c">+11.5</div>
<div class="t " style="left:644.20px;top:46.70px;height:12px;line-height:12px;width:33.60px;text-align:center;font-size:7.38px;color:#333">1.98</div>
<div class="t b" style="left:677.80px;top:46.70px;height:12px;line-height:12px;width:33.70px;text-align:center;font-size:7.4px;color:#1c1c1c">217.5</div>
<div class="t " style="left:711.50px;top:46.70px;height:12px;line-height:12px;width:33.50px;text-align:center;font-size:7.38px;color:#333">1.90</div>
<div class="t " style="left:745.00px;top:46.70px;height:12px;line-height:12px;width:33.60px;text-align:center;font-size:7.38px;color:#333">1.94</div>
<div class="t " style="left:779.80px;top:47.00px;height:12px;line-height:12px;width:18.40px;text-align:center;font-size:7.5px;color:#3570a8;font-style:italic">-77</div>
<div class="t tab" style="left:12.50px;top:66.40px;height:12px;line-height:12px;font-size:7.15px">Выбранные 6</div>
<div class="t tab" style="left:67.50px;top:66.40px;height:12px;line-height:12px;font-size:7.15px">Все исходы</div>
<div class="t tab" style="left:117.00px;top:66.40px;height:12px;line-height:12px;font-size:7.15px">Основные 6</div>
<div class="t tab" style="left:167.50px;top:66.40px;height:12px;line-height:12px;font-size:7.15px">Форы 1</div>
<div class="t tab" style="left:204.00px;top:66.40px;height:12px;line-height:12px;font-size:7.15px">Тоталы 7</div>
<div class="t tab" style="left:245.00px;top:66.40px;height:12px;line-height:12px;font-size:7.15px">Четверти 9</div>
<div class="t tab" style="left:294.00px;top:66.40px;height:12px;line-height:12px;font-size:7.15px">Половины 7</div>
<div class="t tab" style="left:346.00px;top:66.40px;height:12px;line-height:12px;font-size:7.15px">Очки 29</div>
<div class="t tab" style="left:383.00px;top:66.40px;height:12px;line-height:12px;font-size:7.28px">Комбинированные 16</div>
<div class="t tab" style="left:468.00px;top:66.40px;height:12px;line-height:12px;font-size:7.15px">Игроки 3</div>
<div class="t tab" style="left:509.00px;top:66.40px;height:12px;line-height:12px;font-size:7.15px">Специальные 8</div>
<div class="t " style="left:575.50px;top:66.30px;height:12px;line-height:12px;color:#777;font-size:6.9px">Поиск по ,</div>
<svg style="left:613.2px;top:67.8px" width="10" height="10" viewBox="0 0 100 100"><circle cx="34" cy="34" r="22" fill="none" stroke="#2a86c2" stroke-width="10"/><path d="M50 50L88 88" stroke="#2a86c2" stroke-width="14"/></svg>
<svg style="left:784.4px;top:70.2px" width="9.2" height="5.8" viewBox="0 0 92 58"><path d="M8 52L46 14L84 52" fill="none" stroke="#4a9bcf" stroke-width="14"/></svg>
<svg style="left:13.50px;top:83.90px" width="6.8" height="6.3" viewBox="0 0 68 63"><path d="M5 24 L27 50 L63 9" fill="none" stroke="#1476b9" stroke-width="17" stroke-linejoin="miter"/></svg>
<div class="t b" style="left:24.20px;top:81.00px;height:12px;line-height:12px;font-size:6.7px;color:#1c1c1c">ФОРА</div>
<svg style="left:386.70px;top:84.20px" width="8" height="4.8" viewBox="0 0 80 48"><path d="M5 43 L40 8 L75 43" fill="none" stroke="#459dd0" stroke-width="11"/></svg>
<div class="t b" style="left:169.10px;top:93.25px;height:12px;line-height:12px;width:33.70px;text-align:center;font-size:7.35px;color:#1c1c1c">2.45</div>
<div class="t b" style="left:365.60px;top:93.25px;height:12px;line-height:12px;width:33.30px;text-align:center;font-size:7.35px;color:#1c1c1c">1.51</div>
<div class="t " style="left:12.00px;top:93.25px;height:12px;line-height:12px;color:#363636">Ф1 (-16.5)</div>
<div class="t " style="left:208.90px;top:93.25px;height:12px;line-height:12px;color:#363636">Ф2 (+16.5)</div>
<div class="t b" style="left:169.10px;top:105.95px;height:12px;line-height:12px;width:33.70px;text-align:center;font-size:7.35px;color:#1c1c1c">2.35</div>
<div class="t b" style="left:365.60px;top:105.95px;height:12px;line-height:12px;width:33.30px;text-align:center;font-size:7.35px;color:#1c1c1c">1.54</div>
<div class="t " style="left:12.00px;top:105.95px;height:12px;line-height:12px;color:#363636">Ф1 (-15.5)</div>
<div class="t " style="left:208.90px;top:105.95px;height:12px;line-height:12px;color:#363636">Ф2 (+15.5)</div>
<div class="t b" style="left:169.10px;top:118.65px;height:12px;line-height:12px;width:33.70px;text-align:center;font-size:7.35px;color:#1c1c1c">2.20</div>
<div class="t b" style="left:365.60px;top:118.65px;height:12px;line-height:12px;width:33.30px;text-align:center;font-size:7.35px;color:#1c1c1c">1.62</div>
<div class="t " style="left:12.00px;top:118.65px;height:12px;line-height:12px;color:#363636">Ф1 (-14.5)</div>
<div class="t " style="left:208.90px;top:118.65px;height:12px;line-height:12px;color:#363636">Ф2 (+14.5)</div>
<div class="t b" style="left:169.10px;top:131.35px;height:12px;line-height:12px;width:33.70px;text-align:center;font-size:7.35px;color:#1c1c1c">2.10</div>
<div class="t b" style="left:365.60px;top:131.35px;height:12px;line-height:12px;width:33.30px;text-align:center;font-size:7.35px;color:#1c1c1c">1.74</div>
<div class="t " style="left:12.00px;top:131.35px;height:12px;line-height:12px;color:#363636">Ф1 (-13.5)</div>
<div class="t " style="left:208.90px;top:131.35px;height:12px;line-height:12px;color:#363636">Ф2 (+13.5)</div>
<div class="t b" style="left:169.10px;top:144.05px;height:12px;line-height:12px;width:33.70px;text-align:center;font-size:7.35px;color:#1c1c1c">1.95</div>
<div class="t b" style="left:365.60px;top:144.05px;height:12px;line-height:12px;width:33.30px;text-align:center;font-size:7.35px;color:#1c1c1c">1.85</div>
<div class="t " style="left:12.00px;top:144.05px;height:12px;line-height:12px;color:#363636">Ф1 (-12.5)</div>
<div class="t " style="left:208.90px;top:144.05px;height:12px;line-height:12px;color:#363636">Ф2 (+12.5)</div>
<div class="t b" style="left:169.10px;top:156.75px;height:12px;line-height:12px;width:33.70px;text-align:center;font-size:7.35px;color:#1c1c1c">1.74</div>
<div class="t b" style="left:365.60px;top:156.75px;height:12px;line-height:12px;width:33.30px;text-align:center;font-size:7.35px;color:#1c1c1c">2.10</div>
<div class="t " style="left:12.00px;top:156.75px;height:12px;line-height:12px;color:#363636">Ф1 (-10.5)</div>
<div class="t " style="left:208.90px;top:156.75px;height:12px;line-height:12px;color:#363636">Ф2 (+10.5)</div>
<div class="t b" style="left:169.10px;top:169.45px;height:12px;line-height:12px;width:33.70px;text-align:center;font-size:7.35px;color:#1c1c1c">1.62</div>
<div class="t b" style="left:365.60px;top:169.45px;height:12px;line-height:12px;width:33.30px;text-align:center;font-size:7.35px;color:#1c1c1c">2.20</div>
<div class="t " style="left:12.00px;top:169.45px;height:12px;line-height:12px;color:#363636">Ф1 (-9.5)</div>
<div class="t " style="left:208.90px;top:169.45px;height:12px;line-height:12px;color:#363636">Ф2 (+9.5)</div>
<div class="t b" style="left:169.10px;top:182.15px;height:12px;line-height:12px;width:33.70px;text-align:center;font-size:7.35px;color:#1c1c1c">1.54</div>
<div class="t b" style="left:365.60px;top:182.15px;height:12px;line-height:12px;width:33.30px;text-align:center;font-size:7.35px;color:#1c1c1c">2.35</div>
<div class="t " style="left:12.00px;top:182.15px;height:12px;line-height:12px;color:#363636">Ф1 (-8.5)</div>
<div class="t " style="left:208.90px;top:182.15px;height:12px;line-height:12px;color:#363636">Ф2 (+8.5)</div>
<div class="t b" style="left:365.60px;top:194.85px;height:12px;line-height:12px;width:33.30px;text-align:center;font-size:7.35px;color:#1c1c1c">2.55</div>
<div class="t " style="left:208.90px;top:194.85px;height:12px;line-height:12px;color:#363636">Ф2 (+7.5)</div>
<div class="t b" style="left:365.60px;top:207.55px;height:12px;line-height:12px;width:33.30px;text-align:center;font-size:7.35px;color:#1c1c1c">2.80</div>
<div class="t " style="left:208.90px;top:207.55px;height:12px;line-height:12px;color:#363636">Ф2 (+6.5)</div>
<svg style="left:410.80px;top:83.90px" width="6.8" height="6.3" viewBox="0 0 68 63"><path d="M5 24 L27 50 L63 9" fill="none" stroke="#1476b9" stroke-width="17" stroke-linejoin="miter"/></svg>
<div class="t b" style="left:421.50px;top:81.00px;height:12px;line-height:12px;font-size:6.7px;color:#1c1c1c">ТОТАЛ</div>
<svg style="left:783.70px;top:84.20px" width="8" height="4.8" viewBox="0 0 80 48"><path d="M5 43 L40 8 L75 43" fill="none" stroke="#459dd0" stroke-width="11"/></svg>
<div class="t b" style="left:632.00px;top:93.25px;height:12px;line-height:12px;width:33.90px;text-align:center;font-size:7.35px;color:#1c1c1c">2.45</div>
<div class="t b" style="left:762.80px;top:93.25px;height:12px;line-height:12px;width:33.10px;text-align:center;font-size:7.35px;color:#1c1c1c">1.51</div>
<div class="t " style="left:410.00px;top:93.25px;height:12px;line-height:12px;color:#363636">212.5</div>
<div class="t " style="left:540.60px;top:93.25px;height:12px;line-height:12px;color:#363636">Мен</div>
<div class="t " style="left:671.20px;top:93.25px;height:12px;line-height:12px;color:#363636">Бол</div>
<div class="t b" style="left:632.00px;top:105.95px;height:12px;line-height:12px;width:33.90px;text-align:center;font-size:7.35px;color:#1c1c1c">2.30</div>
<div class="t b" style="left:762.80px;top:105.95px;height:12px;line-height:12px;width:33.10px;text-align:center;font-size:7.35px;color:#1c1c1c">1.57</div>
<div class="t " style="left:410.00px;top:105.95px;height:12px;line-height:12px;color:#363636">213.5</div>
<div class="t " style="left:540.60px;top:105.95px;height:12px;line-height:12px;color:#363636">Мен</div>
<div class="t " style="left:671.20px;top:105.95px;height:12px;line-height:12px;color:#363636">Бол</div>
<div class="t b" style="left:632.00px;top:118.65px;height:12px;line-height:12px;width:33.90px;text-align:center;font-size:7.35px;color:#1c1c1c">2.15</div>
<div class="t b" style="left:762.80px;top:118.65px;height:12px;line-height:12px;width:33.10px;text-align:center;font-size:7.35px;color:#1c1c1c">1.64</div>
<div class="t " style="left:410.00px;top:118.65px;height:12px;line-height:12px;color:#363636">214.5</div>
<div class="t " style="left:540.60px;top:118.65px;height:12px;line-height:12px;color:#363636">Мен</div>
<div class="t " style="left:671.20px;top:118.65px;height:12px;line-height:12px;color:#363636">Бол</div>
<div class="t b" style="left:632.00px;top:131.35px;height:12px;line-height:12px;width:33.90px;text-align:center;font-size:7.35px;color:#1c1c1c">2.10</div>
<div class="t b" style="left:762.80px;top:131.35px;height:12px;line-height:12px;width:33.10px;text-align:center;font-size:7.35px;color:#1c1c1c">1.74</div>
<div class="t " style="left:410.00px;top:131.35px;height:12px;line-height:12px;color:#363636">215.5</div>
<div class="t " style="left:540.60px;top:131.35px;height:12px;line-height:12px;color:#363636">Мен</div>
<div class="t " style="left:671.20px;top:131.35px;height:12px;line-height:12px;color:#363636">Бол</div>
<div class="t b" style="left:632.00px;top:144.05px;height:12px;line-height:12px;width:33.90px;text-align:center;font-size:7.35px;color:#1c1c1c">1.98</div>
<div class="t b" style="left:762.80px;top:144.05px;height:12px;line-height:12px;width:33.10px;text-align:center;font-size:7.35px;color:#1c1c1c">1.83</div>
<div class="t " style="left:410.00px;top:144.05px;height:12px;line-height:12px;color:#363636">216.5</div>
<div class="t " style="left:540.60px;top:144.05px;height:12px;line-height:12px;color:#363636">Мен</div>
<div class="t " style="left:671.20px;top:144.05px;height:12px;line-height:12px;color:#363636">Бол</div>
<div class="t b" style="left:632.00px;top:156.75px;height:12px;line-height:12px;width:33.90px;text-align:center;font-size:7.35px;color:#1c1c1c">1.79</div>
<div class="t b" style="left:762.80px;top:156.75px;height:12px;line-height:12px;width:33.10px;text-align:center;font-size:7.35px;color:#1c1c1c">2.02</div>
<div class="t " style="left:410.00px;top:156.75px;height:12px;line-height:12px;color:#363636">218.5</div>
<div class="t " style="left:540.60px;top:156.75px;height:12px;line-height:12px;color:#363636">Мен</div>
<div class="t " style="left:671.20px;top:156.75px;height:12px;line-height:12px;color:#363636">Бол</div>
<div class="t b" style="left:632.00px;top:169.45px;height:12px;line-height:12px;width:33.90px;text-align:center;font-size:7.35px;color:#1c1c1c">1.69</div>
<div class="t b" style="left:762.80px;top:169.45px;height:12px;line-height:12px;width:33.10px;text-align:center;font-size:7.35px;color:#1c1c1c">2.10</div>
<div class="t " style="left:410.00px;top:169.45px;height:12px;line-height:12px;color:#363636">219.5</div>
<div class="t " style="left:540.60px;top:169.45px;height:12px;line-height:12px;color:#363636">Мен</div>
<div class="t " style="left:671.20px;top:169.45px;height:12px;line-height:12px;color:#363636">Бол</div>
<div class="t b" style="left:632.00px;top:182.15px;height:12px;line-height:12px;width:33.90px;text-align:center;font-size:7.35px;color:#1c1c1c">1.61</div>
<div class="t b" style="left:762.80px;top:182.15px;height:12px;line-height:12px;width:33.10px;text-align:center;font-size:7.35px;color:#1c1c1c">2.20</div>
<div class="t " style="left:410.00px;top:182.15px;height:12px;line-height:12px;color:#363636">220.5</div>
<div class="t " style="left:540.60px;top:182.15px;height:12px;line-height:12px;color:#363636">Мен</div>
<div class="t " style="left:671.20px;top:182.15px;height:12px;line-height:12px;color:#363636">Бол</div>
<div class="t b" style="left:632.00px;top:194.85px;height:12px;line-height:12px;width:33.90px;text-align:center;font-size:7.35px;color:#1c1c1c">1.55</div>
<div class="t b" style="left:762.80px;top:194.85px;height:12px;line-height:12px;width:33.10px;text-align:center;font-size:7.35px;color:#1c1c1c">2.35</div>
<div class="t " style="left:410.00px;top:194.85px;height:12px;line-height:12px;color:#363636">221.5</div>
<div class="t " style="left:540.60px;top:194.85px;height:12px;line-height:12px;color:#363636">Мен</div>
<div class="t " style="left:671.20px;top:194.85px;height:12px;line-height:12px;color:#363636">Бол</div>
<div class="t b" style="left:762.80px;top:207.55px;height:12px;line-height:12px;width:33.10px;text-align:center;font-size:7.35px;color:#1c1c1c">2.50</div>
<div class="t " style="left:410.00px;top:207.55px;height:12px;line-height:12px;color:#363636">222.5</div>
<div class="t " style="left:671.20px;top:207.55px;height:12px;line-height:12px;color:#363636">Бол</div>
<svg style="left:13.50px;top:225.15px" width="6.8" height="6.3" viewBox="0 0 68 63"><path d="M5 24 L27 50 L63 9" fill="none" stroke="#1476b9" stroke-width="17" stroke-linejoin="miter"/></svg>
<div class="t b" style="left:24.20px;top:222.25px;height:12px;line-height:12px;font-size:6.7px;color:#1c1c1c">ИНДИВИДУАЛЬНЫЙ ТОТАЛ</div>
<svg style="left:386.70px;top:225.45px" width="8" height="4.8" viewBox="0 0 80 48"><path d="M5 43 L40 8 L75 43" fill="none" stroke="#459dd0" stroke-width="11"/></svg>
<div class="t b" style="left:234.10px;top:234.45px;height:12px;line-height:12px;width:33.80px;text-align:center;font-size:7.35px;color:#1c1c1c">1.98</div>
<div class="t b" style="left:365.60px;top:234.45px;height:12px;line-height:12px;width:33.30px;text-align:center;font-size:7.35px;color:#1c1c1c">1.78</div>
<div class="t " style="left:12.00px;top:234.45px;height:12px;line-height:12px;color:#363636">ИТ1 (113.5)</div>
<div class="t " style="left:142.50px;top:234.45px;height:12px;line-height:12px;color:#363636">Мен</div>
<div class="t " style="left:273.80px;top:234.45px;height:12px;line-height:12px;color:#363636">Бол</div>
<div class="t b" style="left:234.10px;top:247.15px;height:12px;line-height:12px;width:33.80px;text-align:center;font-size:7.35px;color:#1c1c1c">1.92</div>
<div class="t b" style="left:365.60px;top:247.15px;height:12px;line-height:12px;width:33.30px;text-align:center;font-size:7.35px;color:#1c1c1c">1.88</div>
<div class="t " style="left:12.00px;top:247.15px;height:12px;line-height:12px;color:#363636">ИТ1 (114.5)</div>
<div class="t " style="left:142.50px;top:247.15px;height:12px;line-height:12px;color:#363636">Мен</div>
<div class="t " style="left:273.80px;top:247.15px;height:12px;line-height:12px;color:#363636">Бол</div>
<div class="t b" style="left:234.10px;top:259.85px;height:12px;line-height:12px;width:33.80px;text-align:center;font-size:7.35px;color:#1c1c1c">1.81</div>
<div class="t b" style="left:365.60px;top:259.85px;height:12px;line-height:12px;width:33.30px;text-align:center;font-size:7.35px;color:#1c1c1c">2.00</div>
<div class="t " style="left:12.00px;top:259.85px;height:12px;line-height:12px;color:#363636">ИТ1 (115.5)</div>
<div class="t " style="left:142.50px;top:259.85px;height:12px;line-height:12px;color:#363636">Мен</div>
<div class="t " style="left:273.80px;top:259.85px;height:12px;line-height:12px;color:#363636">Бол</div>
<div class="t b" style="left:234.10px;top:272.55px;height:12px;line-height:12px;width:33.80px;text-align:center;font-size:7.35px;color:#1c1c1c">1.98</div>
<div class="t b" style="left:365.60px;top:272.55px;height:12px;line-height:12px;width:33.30px;text-align:center;font-size:7.35px;color:#1c1c1c">1.77</div>
<div class="t " style="left:12.00px;top:272.55px;height:12px;line-height:12px;color:#363636">ИТ2 (101.5)</div>
<div class="t " style="left:142.50px;top:272.55px;height:12px;line-height:12px;color:#363636">Мен</div>
<div class="t " style="left:273.80px;top:272.55px;height:12px;line-height:12px;color:#363636">Бол</div>
<div class="t b" style="left:234.10px;top:285.25px;height:12px;line-height:12px;width:33.80px;text-align:center;font-size:7.35px;color:#1c1c1c">1.92</div>
<div class="t b" style="left:365.60px;top:285.25px;height:12px;line-height:12px;width:33.30px;text-align:center;font-size:7.35px;color:#1c1c1c">1.88</div>
<div class="t " style="left:12.00px;top:285.25px;height:12px;line-height:12px;color:#363636">ИТ2 (102.5)</div>
<div class="t " style="left:142.50px;top:285.25px;height:12px;line-height:12px;color:#363636">Мен</div>
<div class="t " style="left:273.80px;top:285.25px;height:12px;line-height:12px;color:#363636">Бол</div>
<div class="t b" style="left:234.10px;top:297.95px;height:12px;line-height:12px;width:33.80px;text-align:center;font-size:7.35px;color:#1c1c1c">1.81</div>
<div class="t b" style="left:365.60px;top:297.95px;height:12px;line-height:12px;width:33.30px;text-align:center;font-size:7.35px;color:#1c1c1c">2.00</div>
<div class="t " style="left:12.00px;top:297.95px;height:12px;line-height:12px;color:#363636">ИТ2 (103.5)</div>
<div class="t " style="left:142.50px;top:297.95px;height:12px;line-height:12px;color:#363636">Мен</div>
<div class="t " style="left:273.80px;top:297.95px;height:12px;line-height:12px;color:#363636">Бол</div>
<svg style="left:13.50px;top:315.65px" width="6.8" height="6.3" viewBox="0 0 68 63"><path d="M5 24 L27 50 L63 9" fill="none" stroke="#1476b9" stroke-width="17" stroke-linejoin="miter"/></svg>
<div class="t b" style="left:24.20px;top:312.75px;height:12px;line-height:12px;font-size:6.7px;color:#1c1c1c">ИТ ПО ЧЕТВЕРТЯМ</div>
<svg style="left:386.70px;top:315.95px" width="8" height="4.8" viewBox="0 0 80 48"><path d="M5 43 L40 8 L75 43" fill="none" stroke="#459dd0" stroke-width="11"/></svg>
<div class="t b" style="left:276.90px;top:325.00px;height:12px;line-height:12px;width:33.70px;text-align:center;font-size:7.35px;color:#1c1c1c">2.05</div>
<div class="t b" style="left:365.60px;top:325.00px;height:12px;line-height:12px;width:33.30px;text-align:center;font-size:7.35px;color:#1c1c1c">1.69</div>
<div class="t " style="left:138.80px;top:325.00px;height:12px;line-height:12px;color:#363636">ИТ1 (27.5)</div>
<div class="t " style="left:226.80px;top:325.00px;height:12px;line-height:12px;color:#363636">Мен</div>
<div class="t " style="left:316.00px;top:325.00px;height:12px;line-height:12px;color:#363636">Бол</div>
<div class="t b" style="left:276.90px;top:337.70px;height:12px;line-height:12px;width:33.70px;text-align:center;font-size:7.35px;color:#1c1c1c">1.85</div>
<div class="t b" style="left:365.60px;top:337.70px;height:12px;line-height:12px;width:33.30px;text-align:center;font-size:7.35px;color:#1c1c1c">1.85</div>
<div class="t " style="left:138.80px;top:337.70px;height:12px;line-height:12px;color:#363636">ИТ1 (28.5)</div>
<div class="t " style="left:226.80px;top:337.70px;height:12px;line-height:12px;color:#363636">Мен</div>
<div class="t " style="left:316.00px;top:337.70px;height:12px;line-height:12px;color:#363636">Бол</div>
<div class="t b" style="left:276.90px;top:350.40px;height:12px;line-height:12px;width:33.70px;text-align:center;font-size:7.35px;color:#1c1c1c">1.94</div>
<div class="t b" style="left:365.60px;top:350.40px;height:12px;line-height:12px;width:33.30px;text-align:center;font-size:7.35px;color:#1c1c1c">1.76</div>
<div class="t " style="left:138.80px;top:350.40px;height:12px;line-height:12px;color:#363636">ИТ2 (23.5)</div>
<div class="t " style="left:226.80px;top:350.40px;height:12px;line-height:12px;color:#363636">Мен</div>
<div class="t " style="left:316.00px;top:350.40px;height:12px;line-height:12px;color:#363636">Бол</div>
<div class="t b" style="left:276.90px;top:363.10px;height:12px;line-height:12px;width:33.70px;text-align:center;font-size:7.35px;color:#1c1c1c">1.76</div>
<div class="t b" style="left:365.60px;top:363.10px;height:12px;line-height:12px;width:33.30px;text-align:center;font-size:7.35px;color:#1c1c1c">1.94</div>
<div class="t " style="left:138.80px;top:363.10px;height:12px;line-height:12px;color:#363636">ИТ2 (24.5)</div>
<div class="t " style="left:226.80px;top:363.10px;height:12px;line-height:12px;color:#363636">Мен</div>
<div class="t " style="left:316.00px;top:363.10px;height:12px;line-height:12px;color:#363636">Бол</div>
<div class="t b" style="left:232.50px;top:375.80px;height:12px;line-height:12px;width:33.50px;text-align:center;font-size:7.35px;color:#1c1c1c">1.92</div>
<div class="t b" style="left:365.60px;top:375.80px;height:12px;line-height:12px;width:33.30px;text-align:center;font-size:7.35px;color:#1c1c1c">1.92</div>
<div class="t " style="left:138.80px;top:375.80px;height:12px;line-height:12px;color:#363636">ИТ1 Чет</div>
<div class="t " style="left:271.20px;top:375.80px;height:12px;line-height:12px;color:#363636">ИТ1 Нечет</div>
<div class="t b" style="left:232.50px;top:388.50px;height:12px;line-height:12px;width:33.50px;text-align:center;font-size:7.35px;color:#1c1c1c">1.92</div>
<div class="t b" style="left:365.60px;top:388.50px;height:12px;line-height:12px;width:33.30px;text-align:center;font-size:7.35px;color:#1c1c1c">1.92</div>
<div class="t " style="left:138.80px;top:388.50px;height:12px;line-height:12px;color:#363636">ИТ2 Чет</div>
<div class="t " style="left:271.20px;top:388.50px;height:12px;line-height:12px;color:#363636">ИТ2 Нечет</div>
<div class="t " style="left:12.20px;top:357.55px;height:12px;line-height:12px;color:#363636">1-я четверть</div>
<svg style="left:410.80px;top:225.15px" width="6.8" height="6.3" viewBox="0 0 68 63"><path d="M5 24 L27 50 L63 9" fill="none" stroke="#1476b9" stroke-width="17" stroke-linejoin="miter"/></svg>
<div class="t b" style="left:421.50px;top:222.25px;height:12px;line-height:12px;font-size:6.7px;color:#1c1c1c">ИСХОДЫ ПО ЧЕТВЕРТЯМ</div>
<svg style="left:783.70px;top:225.45px" width="8" height="4.8" viewBox="0 0 80 48"><path d="M5 43 L40 8 L75 43" fill="none" stroke="#459dd0" stroke-width="11"/></svg>
<div class="t b" style="left:762.80px;top:234.45px;height:12px;line-height:12px;width:33.10px;text-align:center;font-size:7.35px;color:#1c1c1c">3.90</div>
<div class="t " style="left:713.50px;top:234.45px;height:12px;line-height:12px;color:#363636">2</div>
<div class="t b" style="left:674.40px;top:247.15px;height:12px;line-height:12px;width:33.60px;text-align:center;font-size:7.35px;color:#1c1c1c">2.90</div>
<div class="t " style="left:624.40px;top:247.15px;height:12px;line-height:12px;color:#363636">X2</div>
<div class="t b" style="left:630.60px;top:259.85px;height:12px;line-height:12px;width:33.40px;text-align:center;font-size:7.35px;color:#1c1c1c">1.90</div>
<div class="t b" style="left:762.80px;top:259.85px;height:12px;line-height:12px;width:33.10px;text-align:center;font-size:7.35px;color:#1c1c1c">1.90</div>
<div class="t " style="left:536.20px;top:259.85px;height:12px;line-height:12px;color:#363636">Ф1 (-4.5)</div>
<div class="t " style="left:668.80px;top:259.85px;height:12px;line-height:12px;color:#363636">Ф2 (+4.5)</div>
<div class="t b" style="left:630.60px;top:272.55px;height:12px;line-height:12px;width:33.40px;text-align:center;font-size:7.35px;color:#1c1c1c">1.68</div>
<div class="t b" style="left:762.80px;top:272.55px;height:12px;line-height:12px;width:33.10px;text-align:center;font-size:7.35px;color:#1c1c1c">2.04</div>
<div class="t " style="left:536.20px;top:272.55px;height:12px;line-height:12px;color:#363636">Ф1 (-3.5)</div>
<div class="t " style="left:668.80px;top:272.55px;height:12px;line-height:12px;color:#363636">Ф2 (+3.5)</div>
<div class="t b" style="left:630.60px;top:285.25px;height:12px;line-height:12px;width:33.40px;text-align:center;font-size:7.35px;color:#1c1c1c">2.04</div>
<div class="t b" style="left:762.80px;top:285.25px;height:12px;line-height:12px;width:33.10px;text-align:center;font-size:7.35px;color:#1c1c1c">1.68</div>
<div class="t " style="left:536.20px;top:285.25px;height:12px;line-height:12px;color:#363636">ТМ (51.5)</div>
<div class="t " style="left:668.80px;top:285.25px;height:12px;line-height:12px;color:#363636">ТБ (51.5)</div>
<div class="t b" style="left:630.60px;top:297.95px;height:12px;line-height:12px;width:33.40px;text-align:center;font-size:7.35px;color:#1c1c1c">1.90</div>
<div class="t b" style="left:762.80px;top:297.95px;height:12px;line-height:12px;width:33.10px;text-align:center;font-size:7.35px;color:#1c1c1c">1.90</div>
<div class="t " style="left:536.20px;top:297.95px;height:12px;line-height:12px;color:#363636">ТМ (52.5)</div>
<div class="t " style="left:668.80px;top:297.95px;height:12px;line-height:12px;color:#363636">ТБ (52.5)</div>
<div class="t b" style="left:630.60px;top:310.65px;height:12px;line-height:12px;width:33.40px;text-align:center;font-size:7.35px;color:#1c1c1c">1.68</div>
<div class="t b" style="left:762.80px;top:310.65px;height:12px;line-height:12px;width:33.10px;text-align:center;font-size:7.35px;color:#1c1c1c">2.04</div>
<div class="t " style="left:536.20px;top:310.65px;height:12px;line-height:12px;color:#363636">ТМ (53.5)</div>
<div class="t " style="left:668.80px;top:310.65px;height:12px;line-height:12px;color:#363636">ТБ (53.5)</div>
<div class="t b" style="left:630.60px;top:323.35px;height:12px;line-height:12px;width:33.40px;text-align:center;font-size:7.35px;color:#1c1c1c">1.92</div>
<div class="t b" style="left:762.80px;top:323.35px;height:12px;line-height:12px;width:33.10px;text-align:center;font-size:7.35px;color:#1c1c1c">1.92</div>
<div class="t " style="left:536.20px;top:323.35px;height:12px;line-height:12px;color:#363636">Чет</div>
<div class="t " style="left:668.80px;top:323.35px;height:12px;line-height:12px;color:#363636">Нечет</div>
<div class="t " style="left:410.50px;top:279.65px;height:12px;line-height:12px;color:#363636">1-я четверть</div>
</div></body></html>
